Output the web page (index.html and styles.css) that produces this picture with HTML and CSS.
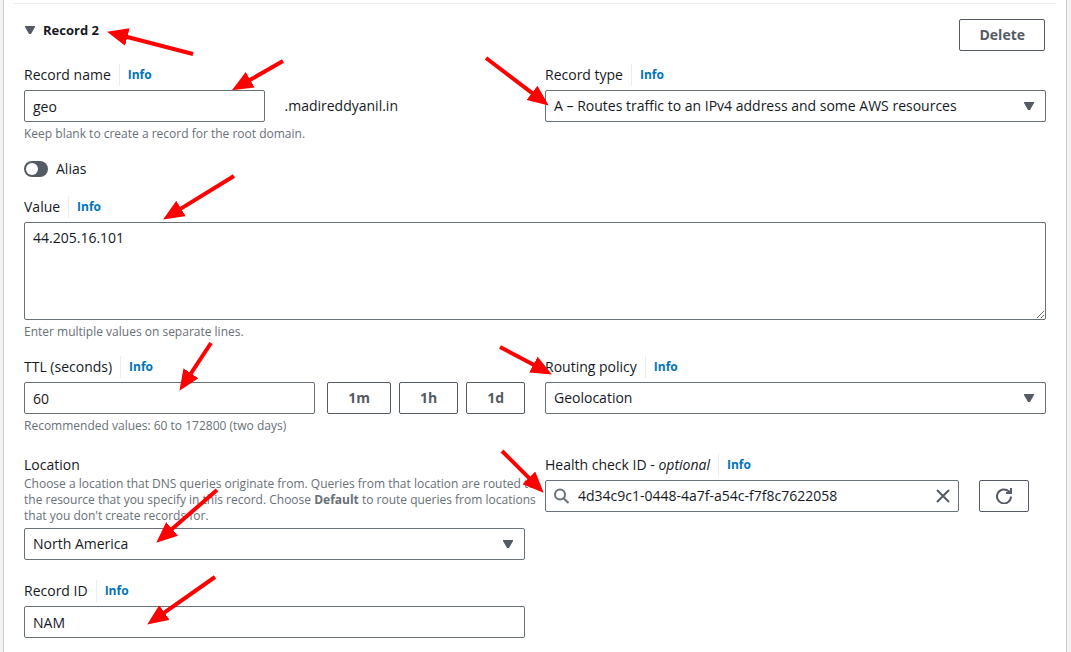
FILE: index.html
```html
<!DOCTYPE html>
<html lang="en">
<head>
<meta charset="utf-8">
<title>Create record</title>
<link rel="stylesheet" href="styles.css">
</head>
<body>
<main class="panel">
  <form class="record">
    <header class="record-header">
      <button type="button" class="toggle-section" aria-expanded="true">
        <svg class="caret" viewBox="0 0 10 8" aria-hidden="true"><path d="M0 0h10v1L6 8H4L0 1z"/></svg>
        Record 2
      </button>
      <button type="button" class="btn">Delete</button>
    </header>

    <div class="row">
      <div class="field">
        <div class="label-row"><label for="name">Record name</label><a class="info" href="#">Info</a></div>
        <div class="halves">
          <input class="control" id="name" type="text" value="geo">
          <span>.madireddyanil.in</span>
        </div>
        <p class="hint">Keep blank to create a record for the root domain.</p>
      </div>
      <div class="field">
        <div class="label-row"><label for="type">Record type</label><a class="info" href="#">Info</a></div>
        <div class="select">
          <select class="control" id="type"><option>A – Routes traffic to an IPv4 address and some AWS resources</option></select>
          <svg class="caret" viewBox="0 0 10 8" aria-hidden="true"><path d="M0 0h10v1L6 8H4L0 1z"/></svg>
        </div>
      </div>
    </div>

    <label class="alias"><input class="switch" type="checkbox" role="switch">Alias</label>

    <div class="field">
      <div class="label-row"><label for="value">Value</label><a class="info" href="#">Info</a></div>
      <textarea class="control area" id="value">44.205.16.101</textarea>
      <p class="hint">Enter multiple values on separate lines.</p>
    </div>

    <div class="row">
      <div class="field">
        <div class="label-row"><label for="ttl">TTL (seconds)</label><a class="info" href="#">Info</a></div>
        <div class="ttl">
          <input class="control" id="ttl" type="text" value="60">
          <div class="presets">
            <button type="button" class="btn">1m</button>
            <button type="button" class="btn">1h</button>
            <button type="button" class="btn">1d</button>
          </div>
        </div>
        <p class="hint">Recommended values: 60 to 172800 (two days)</p>
      </div>
      <div class="field">
        <div class="label-row"><label for="policy">Routing policy</label><a class="info" href="#">Info</a></div>
        <div class="select">
          <select class="control" id="policy"><option>Geolocation</option></select>
          <svg class="caret" viewBox="0 0 10 8" aria-hidden="true"><path d="M0 0h10v1L6 8H4L0 1z"/></svg>
        </div>
      </div>
    </div>

    <div class="row row-last">
      <div class="stack">
        <div class="field">
          <div class="label-row"><label for="location">Location</label></div>
          <p class="description">Choose a location that DNS queries originate from. Queries from that location are routed to<br>the resource that you specify in this record. Choose <strong>Default</strong> to route queries from locations<br>that you don't create records for.</p>
          <div class="select">
            <select class="control" id="location"><option>North America</option></select>
            <svg class="caret" viewBox="0 0 10 8" aria-hidden="true"><path d="M0 0h10v1L6 8H4L0 1z"/></svg>
          </div>
        </div>
        <div class="field">
          <div class="label-row"><label for="record-id">Record ID</label><a class="info" href="#">Info</a></div>
          <input class="control" id="record-id" type="text" value="NAM">
        </div>
      </div>
      <div class="field">
        <div class="label-row"><label for="health">Health check ID - <em>optional</em></label><a class="info" href="#">Info</a></div>
        <div class="health">
          <div class="search">
            <svg class="icon find" viewBox="0 0 16 16" aria-hidden="true"><circle cx="6" cy="6.500" r="5"/><path d="M9.600 10.200 14.500 15"/></svg>
            <input id="health" type="text" value="4d34c9c1-0448-4a7f-a54c-f7f8c7622058">
            <button type="button" class="clear" aria-label="Clear"><svg class="icon" viewBox="0 0 16 16" aria-hidden="true"><path d="M2 2l12 12M14 2 2 14"/></svg></button>
          </div>
          <button type="button" class="btn refresh" aria-label="Refresh"><svg class="icon" viewBox="0 0 16 16" aria-hidden="true"><path d="M15 8.500A7 7 0 1 1 12.800 3.300L14.500 5"/><path d="M10 5h5V0"/></svg></button>
        </div>
      </div>
    </div>
  </form>
</main>

<svg class="annotations" width="1071" height="652" viewBox="0 0 1071 652" aria-hidden="true">
  <defs>
    <marker id="head" markerUnits="userSpaceOnUse" markerWidth="22" markerHeight="20" refX="4" refY="9" orient="auto"><path d="M0 0 21 9 0 18z"/></marker>
  </defs>
  <path d="M193 54 123.500 36"/>
  <path d="M283 61 246.700 81.800"/>
  <path d="M486 58 535.200 95.300"/>
  <path d="M234 176 177.600 210.600"/>
  <path d="M211 343 188.800 376.600"/>
  <path d="M500 347 536.900 366.500"/>
  <path d="M502 451 531.700 480.700"/>
  <path d="M217 490 169.100 531.500"/>
  <path d="M215 577 161.100 614.800"/>
</svg>
</body>
</html>
```
FILE: styles.css
```css
* { box-sizing: border-box; }

body {
  margin: 0;
  background: #f2f3f3;
  color: #16191f;
  font: 14px/22px "Open Sans", "Noto Sans", sans-serif;
}

p { margin: 0; }
input, select, textarea, button { font: inherit; color: inherit; }

.panel {
  min-height: 100vh;
  margin: 0 4px 0 3px;
  padding: 3px 10px 14px;
  background: #fff;
  border: solid #c9cccc;
  border-width: 0 1px;
}

.record {
  display: flex;
  flex-direction: column;
  gap: 16px;
  padding: 15px 10px 0;
  border-top: 1px solid #eaeded;
}

.record-header {
  display: flex;
  justify-content: space-between;
  align-items: flex-start;
  margin-bottom: -3px;
  padding-right: 1px;
}

.toggle-section {
  display: flex;
  align-items: center;
  gap: 8px;
  padding: 0;
  border: 0;
  background: none;
  font-size: 13px;
  font-weight: 700;
}

.caret { width: 10px; height: 8px; margin-left: 1px; fill: #545b64; }

.row {
  display: grid;
  grid-template-columns: repeat(2, minmax(0, 1fr));
  gap: 20px;
}
.row-last { margin-top: 4px; }

.stack { display: flex; flex-direction: column; gap: 20px; }

.label-row { display: flex; margin-bottom: 4px; }

.info {
  margin-left: 8px;
  padding-left: 8px;
  border-left: 1px solid #eaeded;
  color: #0073bb;
  font-size: 12px;
  font-weight: 700;
  text-decoration: none;
}

.control {
  display: block;
  width: 100%;
  height: 32px;
  padding: 4px 8px;
  border: 1px solid #687078;
  border-radius: 2px;
  background: #fff;
}

.area { height: 98px; resize: vertical; }

.hint, .description { color: #687078; font-size: 12px; line-height: 16px; }
.hint { margin-top: 4px; }
.label-row + .description { margin: -4px 0 4px; white-space: nowrap; }

.halves {
  display: grid;
  grid-template-columns: 1fr 1fr;
  align-items: center;
  gap: 20px;
}

.select { display: grid; align-items: center; }
.select > * { grid-area: 1 / 1; }
.select select { appearance: none; padding-right: 32px; }
.select .caret { justify-self: end; margin-right: 12px; pointer-events: none; }

.alias { display: flex; align-items: center; gap: 8px; }

.switch {
  appearance: none;
  display: flex;
  width: 24px;
  height: 16px;
  margin: 0;
  padding: 2px;
  border-radius: 8px;
  background: #545b64;
}
.switch::before {
  content: "";
  width: 12px;
  height: 12px;
  border-radius: 50%;
  background: #fff;
}
.switch:checked { justify-content: flex-end; background: #0073bb; }

.btn {
  height: 32px;
  padding: 4px 20px;
  border: 1px solid #545b64;
  border-radius: 2px;
  background: #fff;
  color: #545b64;
  font-weight: 700;
}
.record-header .btn { padding: 4px 19px; }

.ttl { display: flex; gap: 12px; }
.ttl .control { flex: 1; min-width: 0; }
.presets { display: flex; gap: 8px; }

.health { display: flex; gap: 20px; padding-right: 17px; }

.search {
  display: flex;
  flex: 1;
  align-items: center;
  gap: 8px;
  height: 32px;
  padding: 0 7px 0 8px;
  border: 1px solid #687078;
  border-radius: 2px;
}
.search input {
  flex: 1;
  min-width: 0;
  padding: 0;
  border: 0;
  outline: 0;
  background: none;
}

.icon {
  display: block;
  width: 16px;
  height: 16px;
  fill: none;
  stroke: #545b64;
  stroke-width: 2;
}
.find { stroke: #687078; }

.clear { padding: 0; border: 0; background: none; }
.refresh { padding: 0 16px; }

.annotations {
  position: absolute;
  top: 0;
  left: 0;
  pointer-events: none;
  fill: none;
  stroke: #f00;
  stroke-width: 4;
}
.annotations > path { marker-end: url("#head"); }
.annotations marker { fill: #f00; stroke: none; }
```
